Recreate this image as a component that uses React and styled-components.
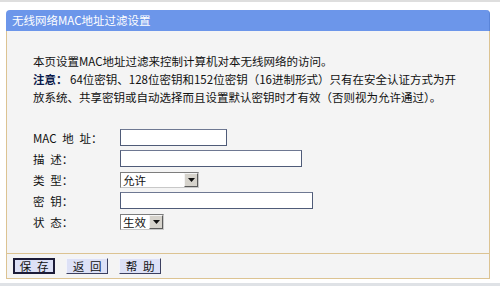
import styled, { createGlobalStyle } from 'styled-components';

const GlobalStyle = createGlobalStyle`
  body {
    margin: 0;
    background: #ffffff;
    font-family: "Noto Sans CJK SC", "Liberation Sans", sans-serif;
  }
`;

const fields = [
  { label: 'MAC\u2002地\u2002址：', kind: 'input', width: 107 },
  { label: '描\u2002述：', kind: 'input', width: 182 },
  { label: '类\u2002型：', kind: 'select', width: 79, value: '允许' },
  { label: '密\u2002钥：', kind: 'input', width: 193 },
  { label: '状\u2002态：', kind: 'select', width: 44, value: '生效' },
];

export default function App() {
  return (
    <Page>
      <GlobalStyle />
      <TopEdge />
      <Panel>
        <Header>无线网络MAC地址过滤设置</Header>
        <Body>
          <Intro>
            <Line>本页设置MAC地址过滤来控制计算机对本无线网络的访问。</Line>
            <Line>
              <Strong>注意：</Strong> 64位密钥、128位密钥和152位密钥（16进制形式）只有在安全认证方式为开
            </Line>
            <Line>放系统、共享密钥或自动选择而且设置默认密钥时才有效（否则视为允许通过）。</Line>
          </Intro>

          <Form>
            {fields.map((f) => (
              <Row key={f.label}>
                <Label>{f.label}</Label>
                {f.kind === 'input' ? (
                  <TextInput $w={f.width} />
                ) : (
                  <SelectBox $w={f.width}>
                    <SelectValue>{f.value}</SelectValue>
                    <ArrowBtn>
                      <svg width="7" height="4" viewBox="0 0 7 4">
                        <path d="M0 0h7L3.5 4z" fill="#111" />
                      </svg>
                    </ArrowBtn>
                  </SelectBox>
                )}
              </Row>
            ))}
          </Form>
        </Body>
        <Footer>
          <Btn $primary>保{'\u2002'}存</Btn>
          <Btn>返{'\u2002'}回</Btn>
          <Btn>帮{'\u2002'}助</Btn>
        </Footer>
      </Panel>
      <BottomEdge />
    </Page>
  );
}

const Page = styled.div`
  width: 500px;
  height: 286px;
  display: flex;
  flex-direction: column;
  overflow: hidden;
  font-size: 11.5px;
  color: #111;
`;

const TopEdge = styled.div`
  height: 2px;
  background: #dedede;
`;

const BottomEdge = styled.div`
  margin-top: auto;
  height: 3px;
  background: #dfe2e6;
`;

const Panel = styled.div`
  margin: 8px 0 0 6px;
  width: 484px;
  display: flex;
  flex-direction: column;
`;

const Header = styled.div`
  height: 21px;
  line-height: 21px;
  padding-left: 6px;
  background: #6c96ea;
  border-radius: 4px 4px 0 0;
  border-right: 1px solid #5a84d8;
  color: #ffffff;
  font-size: 11.5px;
`;

const Body = styled.div`
  background: #f4f4f4;
  border-left: 1px solid #dcc392;
  border-right: 1px solid #dcc392;
  padding: 21px 10px 21px 26px;
`;

const Intro = styled.div`
  display: flex;
  flex-direction: column;
`;

const Line = styled.div`
  height: 18px;
  line-height: 18px;
  white-space: nowrap;
`;

const Strong = styled.b`
  font-weight: 700;
  color: #0a1a4a;
`;

const Form = styled.div`
  margin-top: 21px;
  display: flex;
  flex-direction: column;
`;

const Row = styled.div`
  height: 21px;
  display: grid;
  grid-template-columns: 87px auto;
  justify-content: start;
  align-items: center;
`;

const Label = styled.span`
  white-space: pre;
`;

const TextInput = styled.input`
  box-sizing: border-box;
  width: ${(p) => p.$w}px;
  height: 17px;
  margin: 0;
  padding: 0 2px;
  border: 1px solid #4f5b78;
  border-top-color: #6e7892;
  background: #ffffff;
  outline: none;
`;

const SelectBox = styled.div`
  box-sizing: border-box;
  width: ${(p) => p.$w}px;
  height: 16px;
  display: flex;
  align-items: stretch;
  border: 1px solid #7d7d7d;
  border-right-color: #c8c8c8;
  border-bottom-color: #c8c8c8;
  background: #ffffff;
`;

const SelectValue = styled.span`
  flex: 1;
  padding-left: 2px;
  line-height: 14px;
  font-size: 11.5px;
  white-space: nowrap;
`;

const ArrowBtn = styled.span`
  box-sizing: border-box;
  width: 14px;
  display: flex;
  align-items: center;
  justify-content: center;
  background: #d6d3cc;
  border-top: 1px solid #f4f4f4;
  border-left: 1px solid #f4f4f4;
  border-right: 1px solid #5a5a5a;
  border-bottom: 1px solid #5a5a5a;
`;

const Footer = styled.div`
  height: 24px;
  display: flex;
  align-items: center;
  gap: 11px;
  padding-left: 6px;
  background: #f4f4f4;
  border: 1px solid #dcc392;
`;

const Btn = styled.button`
  box-sizing: border-box;
  width: 42px;
  height: 16px;
  margin: 0;
  padding: 0;
  font-family: inherit;
  font-size: 11.5px;
  line-height: 12px;
  color: #111;
  white-space: pre;
  background: #dde1f6;
  border: ${(p) => (p.$primary ? '2px solid #1c1c38' : '1px solid')};
  border-color: ${(p) =>
    p.$primary ? '#1c1c38' : '#f2f3fb #3c4060 #3c4060 #f2f3fb'};
  cursor: pointer;
`;
